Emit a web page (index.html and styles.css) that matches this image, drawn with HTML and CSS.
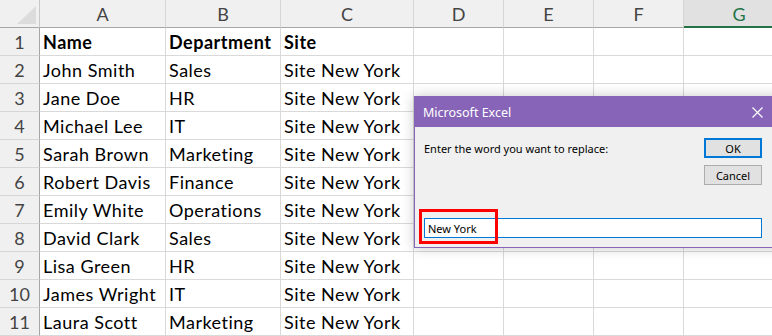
FILE: index.html
```html
<!DOCTYPE html>
<html>
<head>
<meta charset="utf-8">
<link rel="stylesheet" href="styles.css">
</head>
<body>
<div class="sheet">
  <div class="grid">
    <div class="corner"><span class="tri"></span></div>
    <div class="ch">A</div><div class="ch">B</div><div class="ch">C</div><div class="ch">D</div><div class="ch">E</div><div class="ch">F</div><div class="ch sel">G</div>

    <div class="rh">1</div><div class="c b">Name</div><div class="c b">Department</div><div class="c b">Site</div><div class="c"></div><div class="c"></div><div class="c"></div><div class="c"></div>
    <div class="rh">2</div><div class="c">John Smith</div><div class="c">Sales</div><div class="c">Site New York</div><div class="c"></div><div class="c"></div><div class="c"></div><div class="c"></div>
    <div class="rh">3</div><div class="c">Jane Doe</div><div class="c">HR</div><div class="c">Site New York</div><div class="c"></div><div class="c"></div><div class="c"></div><div class="c"></div>
    <div class="rh">4</div><div class="c">Michael Lee</div><div class="c">IT</div><div class="c">Site New York</div><div class="c"></div><div class="c"></div><div class="c"></div><div class="c"></div>
    <div class="rh">5</div><div class="c">Sarah Brown</div><div class="c">Marketing</div><div class="c">Site New York</div><div class="c"></div><div class="c"></div><div class="c"></div><div class="c"></div>
    <div class="rh">6</div><div class="c">Robert Davis</div><div class="c">Finance</div><div class="c">Site New York</div><div class="c"></div><div class="c"></div><div class="c"></div><div class="c"></div>
    <div class="rh">7</div><div class="c">Emily White</div><div class="c">Operations</div><div class="c">Site New York</div><div class="c"></div><div class="c"></div><div class="c"></div><div class="c"></div>
    <div class="rh">8</div><div class="c">David Clark</div><div class="c">Sales</div><div class="c">Site New York</div><div class="c"></div><div class="c"></div><div class="c"></div><div class="c"></div>
    <div class="rh">9</div><div class="c">Lisa Green</div><div class="c">HR</div><div class="c">Site New York</div><div class="c"></div><div class="c"></div><div class="c"></div><div class="c"></div>
    <div class="rh">10</div><div class="c">James Wright</div><div class="c">IT</div><div class="c">Site New York</div><div class="c"></div><div class="c"></div><div class="c"></div><div class="c"></div>
    <div class="rh">11</div><div class="c">Laura Scott</div><div class="c">Marketing</div><div class="c">Site New York</div><div class="c"></div><div class="c"></div><div class="c"></div><div class="c"></div>
  </div>

  <div class="dialog">
    <div class="titlebar">
      <span class="title">Microsoft Excel</span>
      <svg class="close" width="11" height="11" viewBox="0 0 11 11"><path d="M0.5 0.5 L10.5 10.5 M10.5 0.5 L0.5 10.5" stroke="#fff" stroke-width="1.2" fill="none"/></svg>
    </div>
    <div class="dbody">
      <div class="prompt">Enter the word you want to replace:</div>
      <div class="buttons">
        <div class="btn ok">OK</div>
        <div class="btn">Cancel</div>
      </div>
      <div class="inputrow">
        <div class="input">New York</div>
        <span class="highlight"></span>
      </div>
    </div>
  </div>
</div>
</body>
</html>
```

FILE: styles.css
```css
html, body {
  margin: 0;
  padding: 0;
  background: #ffffff;
  overflow: hidden;
}

.sheet {
  position: relative;
  width: 772px;
  height: 336px;
  overflow: hidden;
}

.grid {
  display: grid;
  grid-template-columns: 40px 126px 115px 133px 90px 90px 90px 110px;
  grid-template-rows: 28px repeat(11, 28px);
  font-family: Lato, "Liberation Sans", sans-serif;
  font-size: 18px;
  color: #000;
}

.corner {
  position: relative;
  background: #f0f0f0;
  border-right: 1px solid #c8c8c8;
  border-bottom: 1px solid #a6a6a6;
}

.tri {
  position: absolute;
  left: 17px;
  top: 6px;
  width: 19px;
  height: 18px;
  background: #dcdcdc;
  clip-path: polygon(100% 0, 100% 100%, 0 100%);
}

.ch {
  background: #f0f0f0;
  border-right: 1px solid #d6d6d6;
  border-bottom: 1px solid #a6a6a6;
  display: flex;
  align-items: center;
  justify-content: center;
  color: #444;
  padding-top: 1px;
}

.ch.sel {
  background: #e1e1e1;
  color: #217346;
  border-bottom: 2px solid #217346;
  border-right: none;
}

.rh {
  background: #f0f0f0;
  border-right: 1px solid #a6a6a6;
  border-bottom: 1px solid #d6d6d6;
  display: flex;
  align-items: center;
  justify-content: center;
  color: #444;
  padding-top: 1px;
}

.c {
  border-right: 1px solid #d9d9d9;
  border-bottom: 1px solid #d9d9d9;
  display: flex;
  align-items: center;
  padding: 1px 0 0 3px;
  white-space: nowrap;
  overflow: visible;
  letter-spacing: 0.5px;
}

.c.b {
  font-weight: bold;
}

/* Dialog */
.dialog {
  position: absolute;
  left: 414px;
  top: 96px;
  width: 372px;
  height: 152px;
  box-sizing: border-box;
  border: 1px solid #8764b8;
  background: #f0f0f0;
  box-shadow: 0 0 12px rgba(0, 0, 0, 0.22);
  display: flex;
  flex-direction: column;
  font-family: "Noto Sans", "Liberation Sans", sans-serif;
  font-size: 11px;
  color: #000;
}

.titlebar {
  height: 30px;
  background: #8764b8;
  display: flex;
  align-items: center;
  padding: 0 0 0 8px;
  flex: none;
}

.title {
  color: #fff;
  font-size: 12.5px;
  flex: 1;
}

.close {
  margin-right: 22px;
}

.dbody {
  flex: 1;
  display: grid;
  grid-template-columns: 1fr 58px;
  grid-template-rows: 1fr auto;
  padding: 11px 23px 9px 9px;
  column-gap: 8px;
}

.prompt {
  padding-top: 3px;
}

.buttons {
  display: flex;
  flex-direction: column;
  gap: 7px;
}

.btn {
  height: 20px;
  box-sizing: border-box;
  border: 1px solid #adadad;
  background: #e1e1e1;
  display: flex;
  align-items: center;
  justify-content: center;
}

.btn.ok {
  border: 2px solid #0078d7;
}

.inputrow {
  grid-column: 1 / 3;
  position: relative;
}

.input {
  height: 20px;
  box-sizing: border-box;
  border: 1px solid #0078d7;
  background: #fff;
  display: flex;
  align-items: center;
  padding-left: 3px;
  font-size: 11px;
}

.highlight {
  position: absolute;
  left: -5px;
  top: -9px;
  width: 79px;
  height: 35px;
  box-sizing: border-box;
  border: 3px solid #ff0000;
}
```
